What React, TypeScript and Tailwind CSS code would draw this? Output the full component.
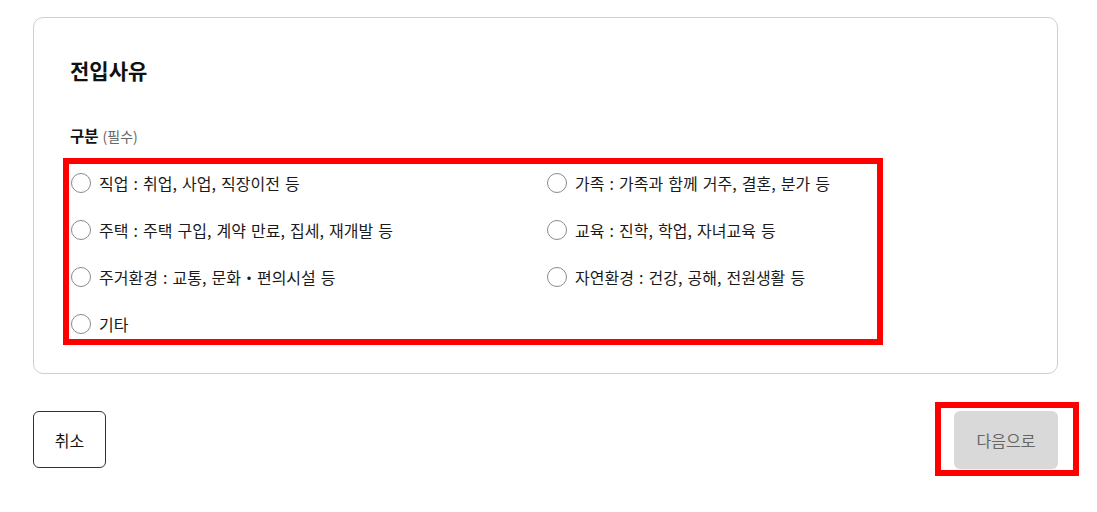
import React from 'react';

const options = [
  '직업 : 취업, 사업, 직장이전 등',
  '가족 : 가족과 함께 거주, 결혼, 분가 등',
  '주택 : 주택 구입, 계약 만료, 집세, 재개발 등',
  '교육 : 진학, 학업, 자녀교육 등',
  '주거환경 : 교통, 문화・편의시설 등',
  '자연환경 : 건강, 공해, 전원생활 등',
  '기타',
];

const RadioOption = ({ label }: { label: string }) => (
  <label className="flex items-center gap-2 h-6 cursor-pointer">
    <span className="w-5 h-5 rounded-full border border-[#8a8a8a] bg-white shrink-0" />
    <span className="text-[16px] text-[#1a1a1a] leading-6 [word-spacing:1.5px]">{label}</span>
  </label>
);

export default function App() {
  return (
    <div
      className="w-[1097px] h-[512px] bg-white pt-[17px] pl-[33px]"
      style={{ fontFamily: '"Noto Sans CJK KR", "Noto Sans", sans-serif' }}
    >
      {/* Card */}
      <div className="w-[1025px] border border-[#cfcfcf] rounded-[10px] pt-[38px] pb-[28px] pl-[36px]">
        <h2 className="text-[21px] font-bold text-[#111] leading-7">전입사유</h2>

        <div className="mt-[41px] flex items-baseline gap-1 leading-5">
          <span className="text-[15.5px] font-bold text-[#111]">구분</span>
          <span className="text-[14px] text-[#666]">(필수)</span>
        </div>

        {/* Options */}
        <div className="mt-[12px] -ml-[7px] w-[820px] border-[6px] border-[#ff0000] pt-[7px] pb-[3px] pl-[2px]">
          <div className="grid grid-cols-[476px_1fr] gap-y-[23px]">
            {options.map((opt) => (
              <RadioOption key={opt} label={opt} />
            ))}
          </div>
        </div>
      </div>

      {/* Actions */}
      <div className="w-[1025px] mt-[37px] flex items-start justify-between">
        <button className="w-[73px] h-[57px] border border-[#333] rounded-[6px] text-[16px] text-[#111] bg-white">
          취소
        </button>
        <div className="-mt-[9px] -mr-[21px] border-[6px] border-[#ff0000] pl-[13px] pr-[15px] pt-[3px] pb-[1px]">
          <button className="w-[104px] h-[58px] rounded-[6px] bg-[#d9d9d9] text-[16px] text-[#666]">
            다음으로
          </button>
        </div>
      </div>
    </div>
  );
}
